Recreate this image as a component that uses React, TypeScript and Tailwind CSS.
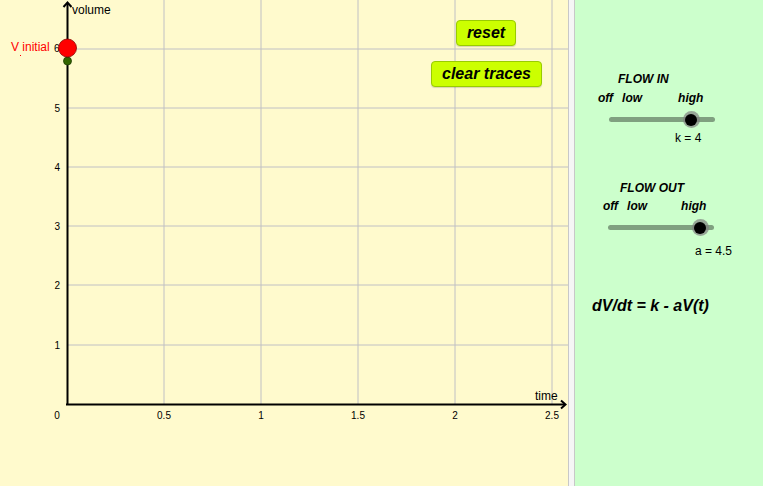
import React from 'react';

const xTicks = [
  { x: 57, label: '0' },
  { x: 164, label: '0.5' },
  { x: 261, label: '1' },
  { x: 358, label: '1.5' },
  { x: 455, label: '2' },
  { x: 552, label: '2.5' },
];

const yTicks = [
  { y: 108, label: '5' },
  { y: 167, label: '4' },
  { y: 226, label: '3' },
  { y: 285, label: '2' },
  { y: 345, label: '1' },
];

function Graph() {
  return (
    <svg width="568" height="486" className="block" style={{ fontFamily: '"Liberation Sans", Arial, sans-serif' }}>
      {[164, 261, 358, 455, 552].map((x) => (
        <line key={x} x1={x} y1={0} x2={x} y2={404} stroke="#c0c0c4" strokeWidth="1" />
      ))}
      {[49, 108, 167, 226, 285, 345].map((y) => (
        <line key={y} x1={67} y1={y} x2={568} y2={y} stroke="#c0c0c4" strokeWidth="1" />
      ))}
      <line x1={67.5} y1={4} x2={67.5} y2={405} stroke="#000" strokeWidth="2" />
      <line x1={66} y1={404.5} x2={565} y2={404.5} stroke="#000" strokeWidth="2" />
      <polyline points="63.5,7 67.5,2.5 71.5,7" fill="none" stroke="#000" strokeWidth="2" />
      <polyline points="561,400.5 565.5,404.5 561,408.5" fill="none" stroke="#000" strokeWidth="2" />
      <text x={72} y={14} fontSize="12" fill="#000">volume</text>
      <text x={535} y={400} fontSize="12" fill="#000">time</text>
      {xTicks.map((t) => (
        <text key={t.label} x={t.x} y={419} fontSize="10" textAnchor="middle" fill="#000">
          {t.label}
        </text>
      ))}
      {yTicks.map((t) => (
        <text key={t.label} x={60} y={t.y + 4} fontSize="10" textAnchor="end" fill="#000">
          {t.label}
        </text>
      ))}
      <text x={54} y={52} fontSize="10" fill="#000">6</text>
      <text x={11} y={51} fontSize="12" fill="#ff0000">V initial</text>
      <rect x={20} y={55} width={1} height={1} fill="#ff0000" />
      <circle cx={67.5} cy={61} r={4} fill="#336600" stroke="#1d3d00" strokeWidth="0.8" />
      <circle cx={67.5} cy={48} r={9} fill="#ff0000" stroke="#8a0000" strokeWidth="0.8" />
    </svg>
  );
}

function Slider({ knob }: { knob: number }) {
  return (
    <div className="relative h-[14px] w-[106px]">
      <div className="absolute left-0 right-0 top-[5px] h-[5px] rounded-full bg-[#80a080]" />
      <div
        className="absolute top-[-1px] h-[17px] w-[17px] rounded-full bg-[#808080]/70 flex items-center justify-center"
        style={{ left: knob - 8.5 }}
      >
        <div className="h-[12px] w-[12px] rounded-full bg-black" />
      </div>
    </div>
  );
}

export default function App() {
  return (
    <div
      className="flex h-[486px] w-[763px] overflow-hidden"
      style={{ fontFamily: '"Liberation Sans", Arial, sans-serif' }}
    >
      <div className="relative w-[568px] bg-[#fffacd]">
        <Graph />
        <button className="absolute left-[456px] top-[20px] h-[26px] w-[60px] rounded-[4px] border border-[#99cc00] bg-[#ccff00] text-[16px] font-bold italic text-black shadow-[0_1px_1px_rgba(0,0,0,0.15)]">
          reset
        </button>
        <button className="absolute left-[431px] top-[61px] h-[26px] w-[111px] rounded-[4px] border border-[#99cc00] bg-[#ccff00] text-[16px] font-bold italic text-black shadow-[0_1px_1px_rgba(0,0,0,0.15)]">
          clear traces
        </button>
      </div>
      <div className="w-[7px] border-x border-[#c8c8c8] bg-[#f6f6f6]" />
      <div className="flex-1 bg-[#ccffcc] pt-[72px] text-black">
        <div className="flex flex-col">
          <div className="pl-[43px] text-[12px] font-bold italic leading-[14px]">FLOW IN</div>
          <div className="mt-[5px] flex pl-[23px] text-[12px] font-bold italic leading-[14px]">
            <span>off</span>
            <span className="ml-[9px]">low</span>
            <span className="ml-[36px]">high</span>
          </div>
          <div className="mt-[7px] pl-[34px]">
            <Slider knob={82} />
          </div>
          <div className="mt-[5px] pl-[100px] text-[12px] leading-[14px]">k = 4</div>
        </div>
        <div className="mt-[36px] flex flex-col">
          <div className="pl-[45px] text-[12px] font-bold italic leading-[14px]">FLOW OUT</div>
          <div className="mt-[4px] flex pl-[28px] text-[12px] font-bold italic leading-[14px]">
            <span>off</span>
            <span className="ml-[9px]">low</span>
            <span className="ml-[34px]">high</span>
          </div>
          <div className="mt-[7px] pl-[33px]">
            <Slider knob={92} />
          </div>
          <div className="mt-[10px] pl-[120px] text-[12px] leading-[14px]">a = 4.5</div>
        </div>
        <div className="mt-[39px] pl-[17px] text-[16px] font-bold italic leading-[18px]">dV/dt = k - aV(t)</div>
      </div>
    </div>
  );
}
